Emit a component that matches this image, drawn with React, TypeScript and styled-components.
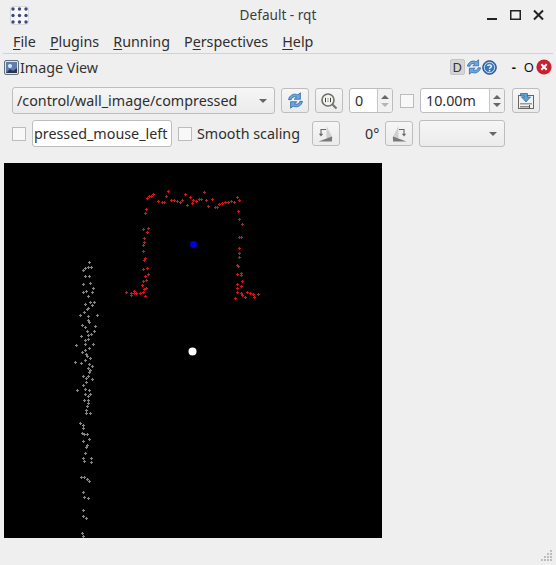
import React from 'react'
import styled, { createGlobalStyle } from 'styled-components'

const GlobalStyle = createGlobalStyle`
  html, body {
    margin: 0;
    padding: 0;
    background: #efefef;
  }
  body {
    font-family: "Noto Sans", "Open Sans", sans-serif;
    font-size: 14px;
    color: #3c3c3c;
  }
`

// points read off the picture in 3x crops: [x, y] relative to the crop
const toReal = (pts: number[][], ox: number, oy: number) =>
  pts.map(([x, y]) => [Math.round(ox + x / 3) + 0.5, Math.round(oy + y / 3) + 0.5])

const RED = toReal(
  [
    [143, 34], [194, 41], [253, 37], [100, 43], [88, 49], [80, 55], [92, 48], [137, 49], [211, 52], [352, 52],
    [358, 61], [115, 64], [127, 67], [133, 67], [154, 59], [163, 61], [172, 64], [181, 67], [187, 61], [220, 61],
    [229, 64], [238, 58], [244, 58], [259, 61], [277, 58], [217, 70], [202, 75], [265, 77], [286, 80], [290, 82],
    [298, 73], [307, 70], [316, 67], [325, 67], [334, 64], [343, 67],
    [79, 88], [76, 100], [85, 145], [70, 148], [82, 157], [73, 175], [73, 187], [70, 196], [70, 214], [76, 235],
    [73, 241], [70, 268], [82, 265], [85, 283], [76, 287], [79, 301], [70, 304], [67, 316], [79, 325], [73, 328],
    [70, 337], [61, 340], [76, 349], [19, 336], [34, 340], [34, 344], [43, 334], [43, 340], [49, 338],
    [355, 94], [358, 118], [367, 133], [358, 172], [364, 172], [358, 205], [358, 220], [358, 232], [352, 256],
    [355, 259], [364, 278], [352, 283], [364, 285], [367, 304], [350, 313], [364, 319], [350, 325], [352, 337],
    [364, 340], [367, 346], [376, 352], [346, 355], [382, 337], [391, 340], [400, 343], [415, 343], [402, 352],
  ],
  120,
  180,
)

const GRAY = [
  ...toReal(
    [
      [88, 22], [76, 40], [70, 46], [85, 37], [94, 37], [76, 64], [88, 64], [70, 88], [91, 85], [100, 100],
      [79, 108], [70, 110], [97, 110], [85, 124], [91, 142], [103, 142], [76, 148], [97, 151], [85, 160], [82, 163],
      [73, 172], [112, 181], [60, 181], [85, 184], [85, 196], [88, 202], [67, 211], [76, 217], [106, 212], [82, 229],
      [103, 229], [94, 238], [85, 241], [62, 244], [76, 256], [85, 253], [100, 266], [49, 271], [76, 268], [88, 280],
      [76, 286], [65, 292], [79, 298], [82, 304], [91, 310], [76, 316], [46, 322], [62, 325], [88, 328], [97, 334],
      [85, 340], [91, 346], [88, 352], [70, 364], [85, 364], [79, 370], [97, 373], [79, 382], [70, 391], [52, 406],
      [76, 403], [88, 406], [76, 418], [91, 418], [85, 424], [73, 436], [85, 436], [85, 445],
    ],
    60,
    255,
  ),
  ...toReal(
    [
      [85, 8], [82, 18], [79, 30], [79, 40], [91, 40], [61, 70], [70, 76], [70, 85], [66, 100], [73, 103],
      [82, 103], [88, 118], [70, 124], [82, 136], [79, 142], [76, 160], [70, 175], [94, 175], [73, 184], [94, 187],
      [62, 232], [73, 232], [82, 237], [87, 242], [70, 277], [73, 292], [85, 294], [70, 331], [70, 347], [79, 355],
      [66, 398], [70, 409],
    ],
    60,
    400,
  ),
]

const crosses = (pts: number[][]) =>
  pts.map(([x, y]) => `M${x - 1.5} ${y}h3M${x} ${y - 1.5}v3`).join('')

const Window = styled.div`
  width: 556px;
  height: 565px;
  background: #efefef;
  display: flex;
  flex-direction: column;
  overflow: hidden;
`

const TitleBar = styled.div`
  height: 30px;
  display: flex;
  align-items: center;
  padding: 0 12px 0 10px;
  flex-shrink: 0;
`

const AppIcon = styled.svg`
  width: 19px;
  height: 19px;
  margin-top: 1px;
`

const WindowTitle = styled.div`
  flex: 1;
  text-align: center;
  font-size: 13.6px;
  color: #3d3d3d;
  padding-left: 40px;
  margin-top: -1px;
`

const WindowButtons = styled.div`
  display: flex;
  align-items: center;
  gap: 12px;
`

const MenuBar = styled.div`
  height: 23px;
  margin: 0 3px;
  padding: 0 0 0 10px;
  display: flex;
  align-items: center;
  gap: 14px;
  border-bottom: 1px solid #d2d2d2;
  font-size: 14.3px;
  color: #2e2e2e;
  flex-shrink: 0;

  u {
    text-underline-offset: 2px;
  }
`

const DockHeader = styled.div`
  height: 26px;
  display: flex;
  align-items: center;
  padding: 0 4px 0 4px;
  flex-shrink: 0;
  font-size: 14.3px;
  color: #333;
`

const DockTitle = styled.span`
  flex: 1;
  margin-left: 1px;
`

const DockD = styled.div`
  width: 15px;
  height: 16px;
  box-sizing: border-box;
  background: #d5d5d5;
  border: 1px solid #c4c4c4;
  border-radius: 2px;
  font-size: 13px;
  line-height: 14px;
  text-align: center;
  color: #333;
  margin-right: 1px;
`

const DockGlyph = styled.span<{ $gap: number }>`
  font-size: 13px;
  font-weight: ${(p) => (p.$gap > 10 ? 700 : 400)};
  color: #111;
  line-height: 14px;
  margin-left: ${(p) => p.$gap}px;
`

const ToolRow = styled.div<{ $top: number }>`
  display: flex;
  align-items: center;
  height: 27px;
  margin-top: ${(p) => p.$top}px;
  padding-left: 12px;
  flex-shrink: 0;
`

const Gap = styled.div<{ $w: number }>`
  width: ${(p) => p.$w}px;
  flex-shrink: 0;
`

const Combo = styled.div<{ $w: number }>`
  width: ${(p) => p.$w}px;
  height: 27px;
  box-sizing: border-box;
  background: linear-gradient(#f6f6f6, #ebebeb);
  border: 1px solid #bdbdbd;
  border-radius: 3px;
  display: flex;
  align-items: center;
  justify-content: space-between;
  padding: 0 5px 0 4px;
  font-size: 14.3px;
  color: #2e2e2e;
  flex-shrink: 0;
`

const ComboArrow = styled.div`
  width: 0;
  height: 0;
  margin-right: 2px;
  border-left: 4px solid transparent;
  border-right: 4px solid transparent;
  border-top: 4px solid #666;
`

const ToolButton = styled.div`
  width: 28px;
  height: 25px;
  box-sizing: border-box;
  border: 1px solid #bdbdbd;
  border-radius: 3px;
  background: linear-gradient(#f6f6f6, #ebebeb);
  display: flex;
  align-items: center;
  justify-content: center;
  flex-shrink: 0;
`

const Check = styled.div`
  width: 14px;
  height: 14px;
  box-sizing: border-box;
  background: #f8f8f8;
  border: 1px solid #bcbcbc;
  flex-shrink: 0;
`

const Spin = styled.div<{ $w: number }>`
  width: ${(p) => p.$w}px;
  height: 25px;
  box-sizing: border-box;
  display: flex;
  border: 1px solid #bdbdbd;
  border-radius: 3px;
  background: #fff;
  flex-shrink: 0;
  overflow: hidden;
`

const SpinValue = styled.div`
  flex: 1;
  display: flex;
  align-items: center;
  padding-left: 5px;
  font-size: 14.3px;
  color: #2e2e2e;
`

const SpinArrows = styled.div`
  width: 14px;
  background: #f1f1f1;
  border-left: 1px solid #c8c8c8;
  display: flex;
  flex-direction: column;
  align-items: center;
  justify-content: center;
  gap: 4px;
`

const SpinArrow = styled.div<{ $down?: boolean; $dim?: boolean }>`
  width: 0;
  height: 0;
  border-left: 4.5px solid transparent;
  border-right: 4.5px solid transparent;
  ${(p) => (p.$down ? 'border-top' : 'border-bottom')}: 4px solid ${(p) => (p.$dim ? '#b5b5b5' : '#666')};
`

const TextInput = styled.div`
  width: 140px;
  height: 27px;
  box-sizing: border-box;
  background: #fff;
  border: 1px solid #bdbdbd;
  border-radius: 3px;
  display: flex;
  align-items: center;
  padding-left: 1px;
  font-size: 14.3px;
  color: #2e2e2e;
  white-space: nowrap;
  overflow: hidden;
  flex-shrink: 0;
`

const Label = styled.span<{ $w: number }>`
  width: ${(p) => p.$w}px;
  font-size: 14.3px;
  color: #2e2e2e;
  white-space: nowrap;
  flex-shrink: 0;
`

const ImageArea = styled.div`
  width: 378px;
  height: 375px;
  margin: 16px 0 0 4px;
  background: #000;
  flex-shrink: 0;
`

const Grip = styled.svg`
  display: block;
  width: 12px;
  height: 11px;
`

const Footer = styled.div`
  flex: 1;
  display: flex;
  justify-content: flex-end;
  align-items: flex-end;
  padding: 0 3px 4px 0;
`

const ReloadIcon = ({ size = 17 }: { size?: number }) => (
  <svg width={size} height={size} viewBox="0 0 16 16">
    <path
      d="M1.5 7.2C2 3.2 6.5 .8 10.2 2.7L12.6 .8V6.8H6.8L8.9 4.8C6.7 3.9 4.4 4.9 3.9 7.2Z"
      fill="#6ca6de"
      stroke="#2f69aa"
      strokeWidth="0.8"
      strokeLinejoin="round"
    />
    <path
      d="M14.5 8.8C14 12.8 9.5 15.2 5.8 13.3L3.4 15.2V9.2H9.2L7.1 11.2C9.3 12.1 11.6 11.1 12.1 8.8Z"
      fill="#6ca6de"
      stroke="#2f69aa"
      strokeWidth="0.8"
      strokeLinejoin="round"
    />
  </svg>
)

const RotateIcon = ({ flip }: { flip?: boolean }) => (
  <svg width="18" height="18" viewBox="0 0 18 18" style={flip ? { transform: 'scaleX(-1)' } : undefined}>
    <path d="M9.5 1L16 13.5H9.5Z" fill="#cfcfcf" />
    <path d="M1.5 16.5L15 11.5V16.5Z" fill="#7a7a7a" />
    <path d="M9 4.5H4V9.5" fill="none" stroke="#666" strokeWidth="1.1" />
    <path d="M1.8 8.8L4 11.5L6.2 8.8Z" fill="#666" />
  </svg>
)

export default function App() {
  return (
    <Window>
      <GlobalStyle />
      <TitleBar>
        <AppIcon viewBox="0 0 19 19">
          <rect x="0.5" y="0.5" width="18" height="18" rx="2.5" fill="#f8f8fa" stroke="#d8d8dc" />
          {[3, 9.5, 16].map((cy) =>
            [3, 9.5, 16].map((cx) => <circle key={`${cx}-${cy}`} cx={cx} cy={cy} r="1.7" fill="#3c4a78" />),
          )}
        </AppIcon>
        <WindowTitle>Default - rqt</WindowTitle>
        <WindowButtons>
          <svg width="11" height="12" viewBox="0 0 11 12">
            <rect x="0" y="9" width="10" height="2" fill="#222" />
          </svg>
          <svg width="11" height="12" viewBox="0 0 11 12">
            <rect x="0.75" y="1.75" width="9.5" height="8.5" fill="none" stroke="#222" strokeWidth="1.5" />
          </svg>
          <svg width="11" height="12" viewBox="0 0 11 12">
            <path d="M1 1.5L10 10.5M10 1.5L1 10.5" stroke="#222" strokeWidth="2" />
          </svg>
        </WindowButtons>
      </TitleBar>

      <MenuBar>
        <span>
          <u>F</u>ile
        </span>
        <span>
          <u>P</u>lugins
        </span>
        <span>
          <u>R</u>unning
        </span>
        <span>
          P<u>e</u>rspectives
        </span>
        <span>
          <u>H</u>elp
        </span>
      </MenuBar>

      <DockHeader>
        <svg width="15" height="15" viewBox="0 0 15 15">
          <rect x="0.5" y="0.5" width="14" height="14" rx="1.5" fill="#dfe3ea" stroke="#6a6f78" />
          <rect x="2" y="2" width="11" height="11" fill="#5d7fae" />
          <circle cx="6" cy="6" r="2" fill="#dfe9f5" />
          <path d="M2 13L6 9L9 11L13 8V13Z" fill="#27354f" />
        </svg>
        <DockTitle>Image View</DockTitle>
        <DockD>D</DockD>
        <ReloadIcon size={16} />
        <svg width="15" height="15" viewBox="0 0 15 15">
          <circle cx="7.5" cy="7.5" r="6.8" fill="#3f78b8" stroke="#1f4f8c" strokeWidth="1" />
          <circle cx="7.5" cy="7.5" r="5.2" fill="none" stroke="#d8e6f5" strokeWidth="0.9" />
          <path d="M5.6 6C5.7 4.6 9.4 4.4 9.4 6.2C9.4 7.6 7.5 7.4 7.5 9" fill="none" stroke="#fff" strokeWidth="1.3" />
          <rect x="6.8" y="10" width="1.4" height="1.4" fill="#fff" />
        </svg>
        <DockGlyph $gap={15}>-</DockGlyph>
        <DockGlyph $gap={8}>O</DockGlyph>
        <svg width="16" height="16" viewBox="0 0 16 16" style={{ marginLeft: 2 }}>
          <circle cx="8" cy="8" r="7.6" fill="#cc2030" />
          <path d="M5.3 5.3L10.7 10.7M10.7 5.3L5.3 10.7" stroke="#fff" strokeWidth="2" />
        </svg>
      </DockHeader>

      <ToolRow $top={7}>
        <Combo $w={263}>
          /control/wall_image/compressed
          <ComboArrow />
        </Combo>
        <Gap $w={6} />
        <ToolButton>
          <ReloadIcon />
        </ToolButton>
        <Gap $w={6} />
        <ToolButton>
          <svg width="18" height="18" viewBox="0 0 18 18">
            <circle cx="8" cy="8" r="6" fill="#f4f4f0" stroke="#6f6f6a" strokeWidth="1.6" />
            <path d="M12.5 12.5L16.5 16.5" stroke="#77776f" strokeWidth="2.2" />
            <path d="M5.5 5.8V10.2M10.5 5.8V10.2" stroke="#444" strokeWidth="1" />
            <path d="M8 6.5V7.5M8 8.8V9.8" stroke="#444" strokeWidth="1" />
          </svg>
        </ToolButton>
        <Gap $w={6} />
        <Spin $w={44}>
          <SpinValue>0</SpinValue>
          <SpinArrows>
            <SpinArrow />
            <SpinArrow $down $dim />
          </SpinArrows>
        </Spin>
        <Gap $w={7} />
        <Check />
        <Gap $w={6} />
        <Spin $w={85}>
          <SpinValue>10.00m</SpinValue>
          <SpinArrows>
            <SpinArrow />
            <SpinArrow $down />
          </SpinArrows>
        </Spin>
        <Gap $w={7} />
        <ToolButton>
          <svg width="18" height="18" viewBox="0 0 18 18">
            <rect x="1.5" y="3.5" width="15" height="13" fill="#f2f2f2" stroke="#666" />
            <rect x="3" y="11" width="12" height="1.5" fill="#9a9a9a" />
            <rect x="3" y="14" width="9" height="1.5" fill="#8a8a8a" />
            <path d="M12.5 13V16.5" stroke="#555" strokeWidth="1" />
            <path d="M3.5 1.5H10.5V5H13.5L9 10L4.5 5H7.5V4H3.5Z" fill="#5aa2d4" stroke="#2a628f" strokeWidth="0.7" />
          </svg>
        </ToolButton>
      </ToolRow>

      <ToolRow $top={6}>
        <Check />
        <Gap $w={6} />
        <TextInput>pressed_mouse_left</TextInput>
        <Gap $w={6} />
        <Check />
        <Gap $w={5} />
        <Label $w={115}>Smooth scaling</Label>
        <ToolButton>
          <RotateIcon />
        </ToolButton>
        <Gap $w={25} />
        <Label $w={20}>0°</Label>
        <ToolButton>
          <RotateIcon flip />
        </ToolButton>
        <Gap $w={6} />
        <Combo $w={86}>
          <span />
          <ComboArrow />
        </Combo>
      </ToolRow>

      <ImageArea>
        <svg width="378" height="375" viewBox="4 163 378 375" style={{ display: 'block' }}>
          <path d={crosses(RED)} stroke="#d01616" strokeWidth="1.1" fill="none" />
          <path d={crosses(GRAY)} stroke="#848484" strokeWidth="1.1" fill="none" />
          <circle cx="193.5" cy="244.5" r="3.4" fill="#0000e0" />
          <circle cx="192.5" cy="351.5" r="4" fill="#fff" />
        </svg>
      </ImageArea>

      <Footer>
        <Grip viewBox="0 0 12 11">
          {[
            [9, 0], [6, 3], [9, 3], [3, 6], [6, 6], [9, 6], [0, 9], [3, 9], [6, 9], [9, 9],
          ].map(([x, y]) => (
            <rect key={`${x}-${y}`} x={x} y={y} width="2" height="2" fill="#bdbdbd" />
          ))}
        </Grip>
      </Footer>
    </Window>
  )
}
